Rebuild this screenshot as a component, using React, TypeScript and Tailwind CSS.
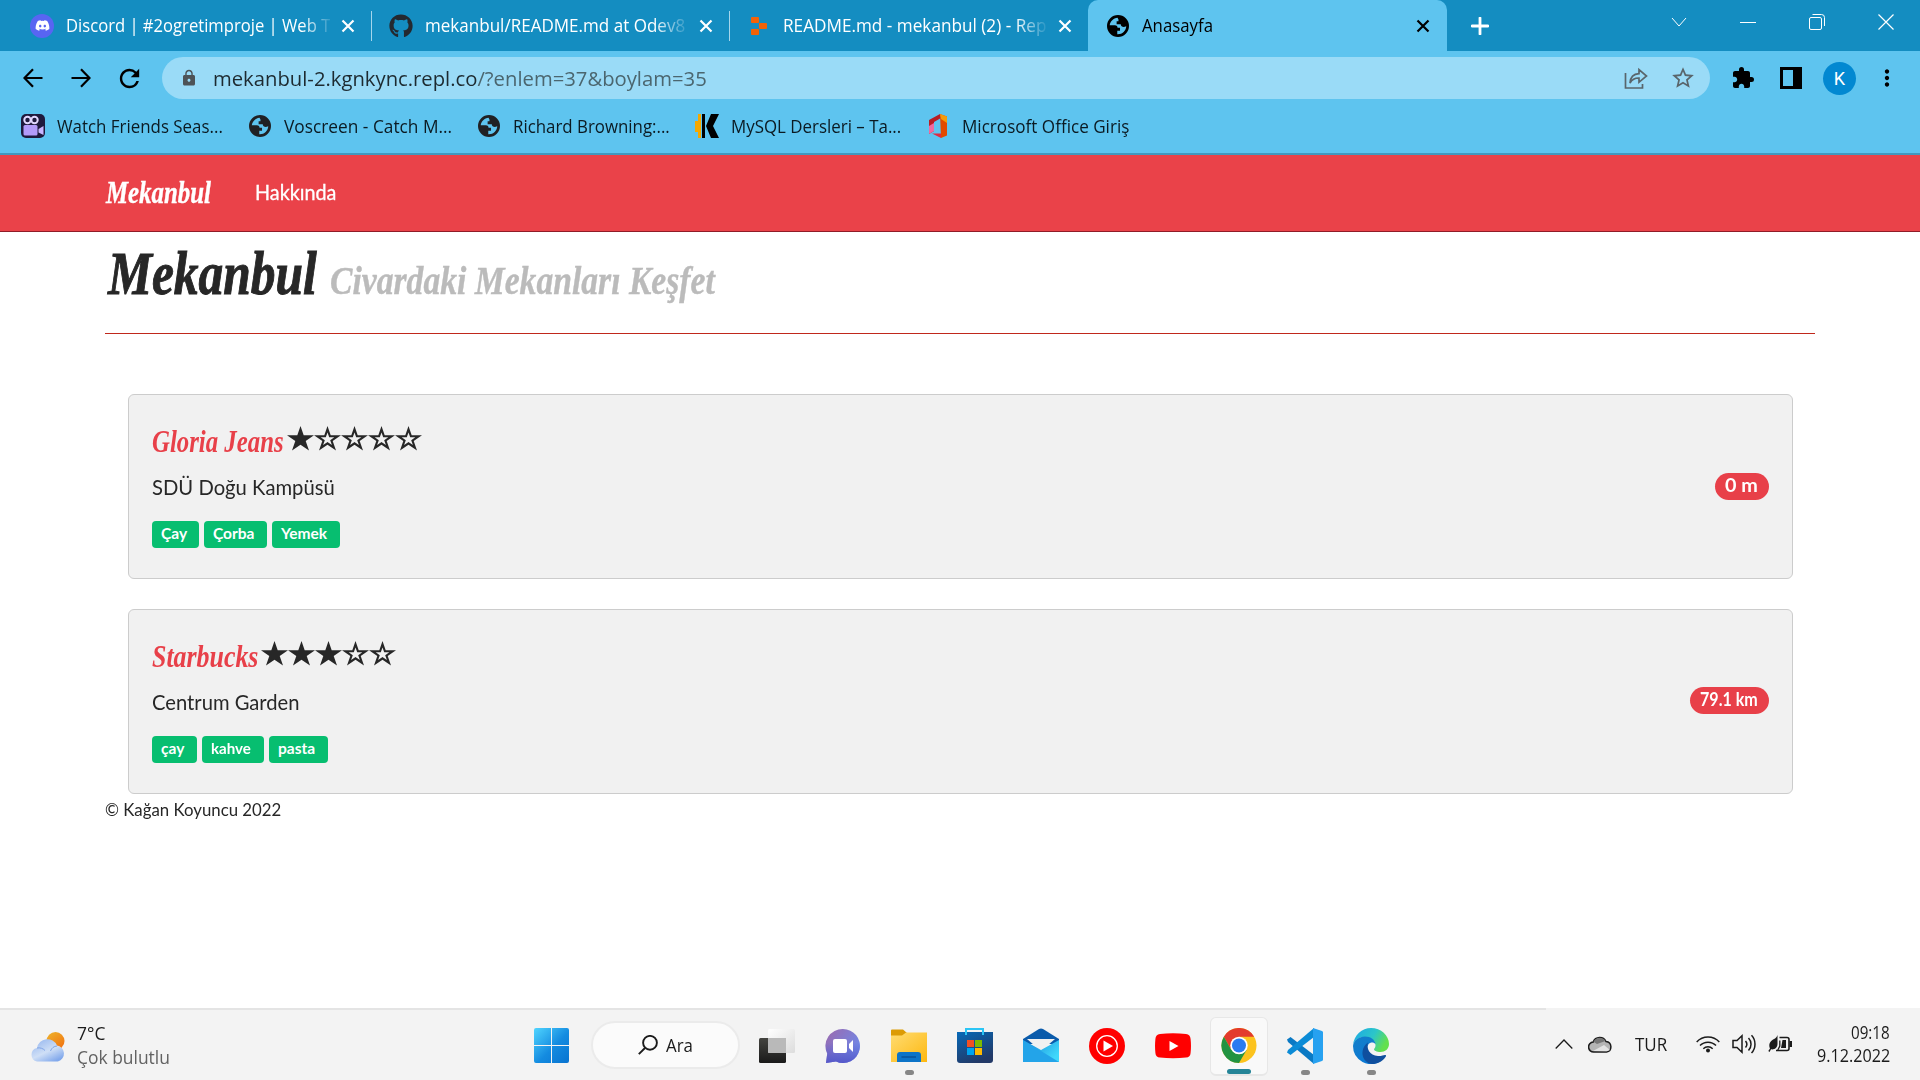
import React, { useLayoutEffect, useRef, useState } from "react";
import { FaDiscord, FaGithub } from "react-icons/fa";
import { MdExtension, MdLock, MdRefresh, MdStarBorder, MdMoreVert } from "react-icons/md";

/* Text stretched horizontally so that it fills the width of its box. */
function Fit({ className = "", children }: { className?: string; children: React.ReactNode }) {
  const box = useRef<HTMLSpanElement>(null);
  const inner = useRef<HTMLSpanElement>(null);
  const [scale, setScale] = useState(1);
  useLayoutEffect(() => {
    if (box.current && inner.current) setScale(box.current.clientWidth / inner.current.offsetWidth);
  }, []);
  return (
    <span ref={box} className={"block shrink-0 whitespace-nowrap " + className}>
      <span ref={inner} className="inline-block origin-left" style={{ transform: `scaleX(${scale})` }}>
        {children}
      </span>
    </span>
  );
}

const SEGOE = "font-['Open_Sans','Noto_Sans',sans-serif]";
const CABIN = "font-['Lato',sans-serif]";
const SCRIPT = "font-['Liberation_Serif',serif] italic font-bold";

function Globe({ className = "" }: { className?: string }) {
  return (
    <svg viewBox="0 0 24 24" className={"shrink-0 " + className}>
      <path
        fill="currentColor"
        fillRule="evenodd"
        d="M12 0a12 12 0 1 0 0 24 12 12 0 0 0 0-24ZM11.500 3C7 3.500 3.500 6.800 3 11.300h5.500c2.200 0 3 1 3 2.700h2.700v3.200h-3V21c5.200.4 9.500-3.500 9.800-8.700l-2.500.7c-2.300 0-3.300-1-3.500-3h-4.500V6.700h2V5Z"
      />
    </svg>
  );
}

function Close({ className = "" }: { className?: string }) {
  return (
    <svg viewBox="0 0 14 14" className={"h-[14px] w-[14px] shrink-0 " + className}>
      <path d="M1.500 1.500l11 11M12.500 1.500l-11 11" stroke="currentColor" strokeWidth="2.2" />
    </svg>
  );
}

function TabStrip() {
  return (
    <div className={"flex h-[51px] items-center bg-[#148dc1] text-[17.5px] text-white " + SEGOE}>
      <span className="ml-[30px] flex h-6 w-6 shrink-0 items-center justify-center rounded-full bg-[#5865f2]">
        <FaDiscord className="h-[15px] w-[15px]" />
      </span>
      <Fit className="ml-3 w-[264px] [mask-image:linear-gradient(to_right,black_236px,transparent_268px)]">Discord | #2ogretimproje | Web T</Fit>
      <Close className="ml-[11px]" />
      <span className="ml-[16px] h-[30px] w-px bg-[#a5d6ec]" />
      <FaGithub className="ml-[17px] h-6 w-6 shrink-0 text-[#24292f]" />
      <Fit className="ml-3 w-[260px] [mask-image:linear-gradient(to_right,black_228px,transparent_266px)]">mekanbul/README.md at Odev8</Fit>
      <Close className="ml-[14px]" />
      <span className="ml-[16px] h-[30px] w-px bg-[#a5d6ec]" />
      <svg viewBox="0 0 16 18" className="ml-[21px] h-[18px] w-4 shrink-0 fill-[#f26207]">
        <rect width="8" height="6" rx="1" />
        <rect x="8" y="6" width="8" height="6" rx="1" />
        <rect y="12" width="8" height="6" rx="1" />
      </svg>
      <Fit className="ml-[16px] w-[263px] [mask-image:linear-gradient(to_right,black_232px,transparent_266px)]">README.md - mekanbul (2) - Rep</Fit>
      <Close className="ml-[12px]" />
      <div className="ml-4 flex h-full w-[359px] shrink-0 items-center rounded-t-[10px] bg-[#5ec4ef] text-black">
        <Globe className="ml-[19px] h-[22px] w-[22px]" />
        <Fit className="ml-[13px] w-[71px]">Anasayfa</Fit>
        <Close className="ml-[203px]" />
      </div>
      <svg viewBox="0 0 18 18" className="ml-[24px] h-[18px] w-[18px] shrink-0">
        <path d="M9 1v16M1 9h16" stroke="white" strokeWidth="2.800" strokeLinecap="round" />
      </svg>
      <div className="mb-[8px] ml-auto mr-[26px] flex items-center gap-[53px]">
        <svg viewBox="0 0 16 16" className="h-4 w-4"><path d="M1 4l7 8 7-8" fill="none" stroke="white" /></svg>
        <svg viewBox="0 0 16 16" className="h-4 w-4"><path d="M0 8.500h16" stroke="white" /></svg>
        <svg viewBox="0 0 16 16" className="h-4 w-4"><g fill="none" stroke="white"><rect x=".5" y="3.500" width="12" height="12" rx="1.500" /><path d="M3.500.5h9a3 3 0 0 1 3 3v8.500" /></g></svg>
        <svg viewBox="0 0 16 16" className="h-4 w-4"><path d="M.5.5l15 15M15.500.5l-15 15" stroke="white" strokeWidth="1.200" /></svg>
      </div>
    </div>
  );
}

function Toolbar() {
  return (
    <div className={"flex h-[54px] items-center text-black " + SEGOE}>
      <svg viewBox="0 0 20 20" className="ml-[23px] h-5 w-5"><path d="M19.500 10H1.800M10 1.200L1.500 10l8.500 8.800" fill="none" stroke="black" strokeWidth="2.200" /></svg>
      <svg viewBox="0 0 20 20" className="ml-[28px] h-5 w-5"><path d="M.5 10h17.700M10 1.200L18.500 10 10 18.800" fill="none" stroke="black" strokeWidth="2.200" /></svg>
      <MdRefresh className="ml-[24px] h-[29px] w-[29px]" />
      <div className="ml-[18px] flex h-[42px] w-[1548px] items-center rounded-full bg-[#9adbf7]">
        <MdLock className="ml-[18px] h-[18px] w-[18px] text-[#4d5357]" />
        <Fit className="ml-[15px] w-[494px] text-[20.500px] text-[#4b666f]">
          <span className="text-[#1d2a30]">mekanbul-2.kgnkync.repl.co</span>/?enlem=37&amp;boylam=35
        </Fit>
        <svg viewBox="0 0 24 22" className="ml-auto h-[22px] w-6">
          <path d="M1.500 6v15h17v-4M6 16c.4-5.500 3-9 9-9.300V2.500L22.500 9 15 15.300V11c-4-.1-7 1.500-9 5Z" fill="none" stroke="#59656b" strokeWidth="1.700" />
        </svg>
        <MdStarBorder className="ml-[22px] mr-[14px] h-[26px] w-[26px] text-[#59656b]" />
      </div>
      <MdExtension className="ml-[21px] h-6 w-6" />
      <svg viewBox="0 0 22 22" className="ml-[25px] h-[22px] w-[22px]"><path fillRule="evenodd" d="M0 0h22v22H0ZM3 3v16h10V3Z" /></svg>
      <span className="ml-[21px] flex h-[33px] w-[33px] items-center justify-center rounded-full bg-[#0288d1] font-['Roboto',sans-serif] text-[18px] text-white">K</span>
      <MdMoreVert className="ml-[18px] h-[26px] w-[26px]" />
    </div>
  );
}

function Bookmarks() {
  return (
    <div className={"flex h-[48px] items-center pb-[6px] text-[17.500px] text-[#0b1a22] " + SEGOE}>
      <svg viewBox="0 0 24 24" className="ml-[21px] h-6 w-6">
        <rect width="24" height="24" rx="5" fill="#1f1a3d" />
        <circle cx="6.500" cy="6" r="3.200" fill="none" stroke="#e1d8ff" strokeWidth="2" />
        <circle cx="13.500" cy="6" r="3.200" fill="none" stroke="#e1d8ff" strokeWidth="2" />
        <rect x="2.500" y="11" width="14" height="10.500" rx="1.500" fill="#b29bfa" />
        <path d="M17.500 15l5-3v9l-5-2.500Z" fill="#c8b6ff" />
      </svg>
      <Fit className="ml-3 w-[166px]">Watch Friends Seas...</Fit>
      <Globe className="ml-[26px] h-[22px] w-[22px] text-[#202124]" />
      <Fit className="ml-[13px] w-[168px]">Voscreen - Catch M...</Fit>
      <Globe className="ml-[26px] h-[22px] w-[22px] text-[#202124]" />
      <Fit className="ml-[13px] w-[157px]">Richard Browning:...</Fit>
      <svg viewBox="0 0 24 24" className="ml-[25px] h-6 w-6">
        <path d="M3 0h3v24H3v-6H0V7h3Z" fill="#f5a800" />
        <path d="M7 0h3v24H7ZM16 0h8l-6 12 6 12h-8l-5-12Z" />
      </svg>
      <Fit className="ml-3 w-[170px]">MySQL Dersleri – Ta...</Fit>
      <svg viewBox="0 0 18 24" className="ml-[28px] h-6 w-[18px]">
        <path d="M0 6L11 0l1 4-7 4v9l-5 3Z" fill="#b81e24" />
        <path d="M0 12l5-3v8l-5 3Z" fill="#ef6aa0" />
        <path d="M11 0l7 2.500v19L12 24Z" fill="#e24a00" />
        <path d="M11 0l7 2.500V9l-6-4Z" fill="#f49b0b" />
        <path d="M3 19.500h9V24Z" fill="#e02b43" />
      </svg>
      <Fit className="ml-[15px] w-[167px]">Microsoft Office Giriş</Fit>
    </div>
  );
}

function Star({ filled }: { filled: boolean }) {
  return (
    <svg viewBox="0 0 27 25" className="h-[25px] w-[27px] shrink-0">
      {filled ? (
        <path d="M13.500 0l3.200 9.200H27l-8.300 5.800 3.300 9.500-8.500-5.700L5 24.500 8.300 15 0 9.200h10.300Z" fill="#272727" />
      ) : (
        <path fillRule="evenodd" d="M13.500 0l3.200 9.200H27l-8.300 5.800 3.300 9.500-8.500-5.700L5 24.500 8.300 15 0 9.200h10.300ZM13.500 6.400l-1.700 4.900H6.700l4.100 3-1.700 4.800 4.400-3 4.400 3-1.700-4.800 4.100-3h-5.100Z" fill="#272727" />
      )}
    </svg>
  );
}

type Tag = { label: string; box: string; text: string };
type Venue = { name: string; nameW: string; gap: string; rating: number; address: string; addressW: string; tags: Tag[]; distance: string; distBox: string; distText: string };

const venues: Venue[] = [
  {
    name: "Gloria Jeans", nameW: "w-[132px]", gap: "ml-[3px]", rating: 1, address: "SDÜ Doğu Kampüsü", addressW: "w-[183px]",
    tags: [
      { label: "Çay", box: "w-[47px]", text: "w-[26px]" },
      { label: "Çorba", box: "w-[63px]", text: "w-[41px]" },
      { label: "Yemek", box: "w-[68px]", text: "w-[46px]" },
    ],
    distance: "0 m", distBox: "mb-0 w-[54px]", distText: "w-[33px]",
  },
  {
    name: "Starbucks", nameW: "w-[106px]", gap: "ml-[3px]", rating: 3, address: "Centrum Garden", addressW: "w-[148px]",
    tags: [
      { label: "çay", box: "w-[45px]", text: "w-[23px]" },
      { label: "kahve", box: "w-[62px]", text: "w-[40px]" },
      { label: "pasta", box: "w-[59px]", text: "w-[37px]" },
    ],
    distance: "79.1 km", distBox: "mb-[2px] w-[79px]", distText: "w-[58px]",
  },
];

function VenueCard({ v }: { v: Venue }) {
  return (
    <article className="flex h-[185px] items-center justify-between rounded-md border border-[#ccc] bg-[#f1f1f1] px-[23px]">
      <div className="h-full pt-[27px]">
        <div className="flex h-[40px] items-center">
          <Fit className={"text-[31px] leading-[40px] text-[#e84049] " + SCRIPT + " " + v.nameW}>{v.name}</Fit>
          <div className={"mb-[7px] flex " + v.gap}>
            {[1, 2, 3, 4, 5].map((n) => <Star key={n} filled={n <= v.rating} />)}
          </div>
        </div>
        <Fit className={"mt-[10px] text-[21px] leading-[30px] text-[#272727] " + CABIN + " " + v.addressW}>{v.address}</Fit>
        <div className="mt-[19px] flex gap-[5px]">
          {v.tags.map((t) => (
            <span key={t.label} className={"flex h-[27px] rounded bg-[#07be70] pl-[9px] text-[15.500px] font-bold leading-[25px] text-white " + CABIN + " " + t.box}>
              <Fit className={t.text}>{t.label}</Fit>
            </span>
          ))}
        </div>
      </div>
      <span className={"flex h-[27px] rounded-full bg-[#e84049] pl-[10px] text-[18px] font-bold leading-[25px] text-white " + CABIN + " " + v.distBox}>
        <Fit className={v.distText}>{v.distance}</Fit>
      </span>
    </article>
  );
}

function Page() {
  return (
    <main className="h-[853px] bg-white">
      <nav className="flex h-[77px] items-center border-b border-[#901c28] bg-[#ea4249] text-white">
        <Fit className={"ml-[106px] w-[105px] text-[31px] [-webkit-text-stroke:0.4px_white] " + SCRIPT}>Mekanbul</Fit>
        <Fit className={"mb-[2px] ml-[44px] w-[81px] text-[21px] [-webkit-text-stroke:0.3px_white] " + CABIN}>Hakkında</Fit>
      </nav>
      <div className="mx-[105px]">
        <header className="flex h-[102px] items-baseline border-b border-[#c0281b] pt-[7px]">
          <Fit className={"ml-[3px] w-[209px] text-[61px] leading-[70px] text-[#272727] [-webkit-text-stroke:1px_#272727] " + SCRIPT}>Mekanbul</Fit>
          <Fit className={"ml-[13px] w-[385px] text-[40px] leading-[50px] text-[#bbb] [-webkit-text-stroke:0.4px_#bbb] " + SCRIPT}>Civardaki Mekanları Keşfet</Fit>
        </header>
        <section className="mx-[23px] mr-[22px] flex flex-col gap-[30px] pt-[60px]">
          {venues.map((v) => <VenueCard key={v.name} v={v} />)}
        </section>
        <Fit className={"mt-[2px] w-[176px] text-[17px] leading-[28px] text-[#272727] " + CABIN}>© Kağan Koyuncu 2022</Fit>
      </div>
    </main>
  );
}

function StartIcon() {
  return (
    <svg viewBox="0 0 36 36" className="h-9 w-9">
      <defs><linearGradient id="win" x2="1" y2="1"><stop stopColor="#50d5ff" /><stop offset=".55" stopColor="#148be0" /><stop offset="1" stopColor="#0873d0" /></linearGradient></defs>
      <path fill="url(#win)" d="M2 0h15v17H0V2a2 2 0 0 1 2-2ZM18 0h15a2 2 0 0 1 2 2v15H18ZM0 18h17v17H2a2 2 0 0 1-2-2ZM18 18h17v15a2 2 0 0 1-2 2H18Z" />
    </svg>
  );
}

function TaskViewIcon() {
  return (
    <svg viewBox="0 0 36 36" className="h-9 w-9">
      <defs>
        <linearGradient id="tv1" x2="0" y2="1"><stop stopColor="#444440" /><stop offset="1" stopColor="#1a1a1a" /></linearGradient>
        <linearGradient id="tv2" x2="1" y2="1"><stop stopColor="#fff" /><stop offset="1" stopColor="#dcdcdc" /></linearGradient>
      </defs>
      <rect y="10" width="27" height="25" rx="1.500" fill="url(#tv1)" />
      <rect x="9" y="1" width="27" height="24" rx="1.500" fill="url(#tv2)" />
      <path d="M9 10h18v15H10.500A1.500 1.500 0 0 1 9 23.500Z" fill="#b9b9b9" />
    </svg>
  );
}

function ChatIcon() {
  return (
    <svg viewBox="0 0 36 36" className="h-9 w-9">
      <defs>
        <linearGradient id="chat" x1=".1" x2=".9" y1="0" y2=".6"><stop stopColor="#9a6bb0" /><stop offset="1" stopColor="#7187e6" /></linearGradient>
        <linearGradient id="chat2" x2="0" y2="1"><stop offset=".4" stopColor="#5558c9" stopOpacity="0" /><stop offset="1" stopColor="#5558c9" /></linearGradient>
      </defs>
      <path d="M18 1a17 17 0 1 1-7 32.500L1 35l1.200-9.500A17 17 0 0 1 18 1Z" fill="url(#chat)" />
      <path d="M18 1a17 17 0 1 1-7 32.500L1 35l1.200-9.500A17 17 0 0 1 18 1Z" fill="url(#chat2)" />
      <rect x="8" y="11" width="14" height="14" rx="2" fill="#fff" />
      <path d="M24 16l4-4v12l-4-4Z" fill="#fff" />
    </svg>
  );
}

function ExplorerIcon() {
  return (
    <svg viewBox="0 0 36 36" className="h-9 w-9">
      <defs><linearGradient id="fold" x2="1" y2="1"><stop stopColor="#ffdc73" /><stop offset="1" stopColor="#fdb810" /></linearGradient></defs>
      <path d="M1 1.500h11l4 3.500h19v5H0v-7.500a1 1 0 0 1 1-1Z" fill="#dc9b05" />
      <path d="M0 7.500h11l4-3h21v29.500H0Z" fill="url(#fold)" />
      <path d="M6 34V27a3 3 0 0 1 3-3h18a3 3 0 0 1 3 3v7Z" fill="#0d74c8" />
      <path d="M10.500 29h14.500" stroke="#09529a" strokeWidth="1.500" />
    </svg>
  );
}

function StoreIcon() {
  return (
    <svg viewBox="0 0 36 36" className="h-9 w-9">
      <defs><linearGradient id="store" x2=".5" y2="1"><stop stopColor="#0669b8" /><stop offset="1" stopColor="#223967" /></linearGradient></defs>
      <path d="M0 4h36v28a3 3 0 0 1-3 3H3a3 3 0 0 1-3-3Z" fill="url(#store)" />
      <path d="M9 7V1h17v6" fill="none" stroke="#2bc5f5" strokeWidth="2" />
      <path d="M10 12h7v7h-7Z" fill="#f25022" /><path d="M18 12h7v7h-7Z" fill="#7fba00" />
      <path d="M10 20h7v7h-7Z" fill="#00a4ef" /><path d="M18 20h7v7h-7Z" fill="#ffb900" />
    </svg>
  );
}

function MailIcon() {
  return (
    <svg viewBox="0 0 36 36" className="h-9 w-9">
      <defs><linearGradient id="mail" x2="1" y2=".6"><stop stopColor="#1684d5" /><stop offset="1" stopColor="#40d8fb" /></linearGradient></defs>
      <path d="M0 11L16 1a4 4 0 0 1 4 0l16 10v5H0Z" fill="#0a5bab" />
      <path d="M4 11h28L18 23Z" fill="#f1f1f1" />
      <path d="M0 12l18 10 18-10v22H0Z" fill="url(#mail)" />
      <path d="M0 12l36 22H0Z" fill="#23a4e9" />
    </svg>
  );
}

function YtMusicIcon() {
  return (
    <svg viewBox="0 0 36 36" className="h-9 w-9">
      <circle cx="18" cy="18" r="18" fill="#f00" />
      <circle cx="18" cy="18" r="10.300" fill="none" stroke="#fff" strokeWidth="1.300" />
      <path d="M14.500 12.500L24 18l-9.500 5.500Z" fill="#fff" />
    </svg>
  );
}

function YoutubeIcon() {
  return (
    <svg viewBox="0 0 36 36" className="h-9 w-9">
      <path d="M5 6c8-.9 18-.9 26 0 3 .3 4.300 2 4.600 5 .5 5 .5 9 0 14-.3 3-1.600 4.300-4.600 4.600-8 .7-18 .7-26 0-3-.3-4.300-1.600-4.600-4.600-.5-5-.5-9 0-14C.700 8 2 6.300 5 6Z" fill="#f00" />
      <path d="M14.500 13L23.500 18l-9 5Z" fill="#fff" />
    </svg>
  );
}

function ChromeIcon() {
  return (
    <svg viewBox="0 0 36 36" className="h-9 w-9">
      <circle cx="18" cy="18" r="18" fill="#fcc31e" />
      <path d="M18 9h15.600A18 18 0 0 0 2.400 9l7.800 13.500Z" fill="#e33b2e" />
      <path d="M2.400 9a18 18 0 0 0 15.600 27l7.800-13.500H10.200Z" fill="#229342" />
      <circle cx="18" cy="18" r="9" fill="#fff" />
      <circle cx="18" cy="18" r="7.200" fill="#2b7bf0" />
    </svg>
  );
}

function CodeIcon() {
  return (
    <svg viewBox="0 0 36 36" className="h-9 w-9">
      <path d="M0 11.500L3.500 9 27 27v9L1 14Z" fill="#0a79c4" />
      <path d="M0 24.500L3.500 27 27 9V0L1 22Z" fill="#0b8bd6" />
      <path d="M26 0l9 3a2 2 0 0 1 1 2v26a2 2 0 0 1-1 2l-9 3Z" fill="#27a1f0" />
    </svg>
  );
}

function EdgeIcon() {
  return (
    <svg viewBox="0 0 36 36" className="h-9 w-9">
      <defs>
        <linearGradient id="edge1" x2="1" y2=".4"><stop stopColor="#1ba7e8" /><stop offset=".6" stopColor="#2cc6c8" /><stop offset="1" stopColor="#63e04e" /></linearGradient>
        <linearGradient id="edge2" x2=".6" y2="1"><stop stopColor="#147fc9" /><stop offset="1" stopColor="#0a78d4" /></linearGradient>
      </defs>
      <path d="M0 17C1 7 9 0 18 0c10 0 18 7.500 18 16 0 5-4 8-8.500 8-4 0-6.500-1.500-6.500-2.700 0-.8 1.500-1.300 1.500-3.800 0-4-4-8.500-11-8.500C6 9 1.500 12.500 0 17Z" fill="url(#edge1)" />
      <path d="M0 18C.5 12.500 6 8.500 12 8.500c6 0 10 3.500 10.500 7.500-1.500-1.800-5-2.500-7.200.5C12 21.500 16 29 24 30l4 3A18 18 0 0 1 0 18Z" fill="url(#edge2)" />
      <path d="M15 14.500c-2 5.500 1.500 13 10 13.500 4 .2 6-1.500 7.500-1 .8.300.6 1 .2 1.700C29.500 33.500 24 36 19 36c-7-1-10-7-9.500-12 .3-4 2.500-7.500 5.500-9.500Z" fill="#0f4f9e" />
    </svg>
  );
}

function Slot({ children, mark = "none" }: { children: React.ReactNode; mark?: "none" | "dot" | "bar" }) {
  return (
    <div className="flex w-[66px] shrink-0 flex-col items-center">
      <div className={mark === "bar"
        ? "flex h-[59px] w-[58px] flex-col items-center rounded-md border border-b-2 border-[#e7e7e7] bg-[#f9f9f9] pt-[10px]"
        : "flex h-[59px] w-[58px] flex-col items-center pt-[11px]"}>
        {children}
        {mark === "dot" && <span className="mt-[6px] h-[5px] w-[9px] rounded-full bg-[#868686]" />}
        {mark === "bar" && <span className="mt-[6px] h-[5px] w-6 shrink-0 rounded-full bg-[#258497]" />}
      </div>
    </div>
  );
}

function Taskbar() {
  return (
    <footer className={"h-[72px] bg-[#f3f3f3] text-[#1b1b1b] " + SEGOE}>
      <div className="h-[2px] w-[1546px] bg-[#e4e4e4]" />
      <div className="flex h-[70px]">
        <svg viewBox="0 0 36 30" className="ml-[30px] mt-[22px] h-[30px] w-9 shrink-0">
          <defs>
            <linearGradient id="sun" x2=".7" y2="1"><stop stopColor="#eeb52b" /><stop offset="1" stopColor="#f17412" /></linearGradient>
            <linearGradient id="cl" x2=".7" y2="1"><stop stopColor="#8fb2ee" /><stop offset=".6" stopColor="#cfdff6" /><stop offset="1" stopColor="#82a9ec" /></linearGradient>
          </defs>
          <circle cx="25.500" cy="9" r="9" fill="url(#sun)" />
          <path d="M7 29.500a6.900 6.900 0 0 1 0-13.500A10.500 10.500 0 0 1 27 13.500a8.200 8.200 0 0 1 1 16Z" fill="url(#cl)" />
          <path d="M7 16c3-.6 6 .4 8 2.500M20.500 19c1-3 3.500-4.800 6.500-5" fill="none" stroke="#7fa4e6" />
        </svg>
        <div className="ml-[11px] w-[380px] pt-[11px] text-[18px] leading-[24px]">
          <Fit className="w-[28px]">7°C</Fit>
          <Fit className="w-[93px] text-[#626262]">Çok bulutlu</Fit>
        </div>
        <div className="ml-[77px] mt-[18px] w-9 shrink-0"><StartIcon /></div>
        <div className="ml-[21px] mr-[-1px] mt-[11px] flex h-[48px] w-[149px] shrink-0 items-center rounded-full border-2 border-[#ebebeb] bg-[#fbfbfb]">
          <svg viewBox="0 0 20 20" className="ml-[45px] h-5 w-5"><g fill="none" stroke="#1b1b1b" strokeWidth="1.900"><circle cx="12" cy="7.800" r="6.900" /><path d="M7 13L.8 19.200" /></g></svg>
          <Fit className="ml-[8px] mt-px w-[27px] text-[17.500px]">Ara</Fit>
        </div>
        <div className="ml-[5px] flex pt-[7px]">
          <Slot><TaskViewIcon /></Slot>
          <Slot><ChatIcon /></Slot>
          <Slot mark="dot"><ExplorerIcon /></Slot>
          <Slot><StoreIcon /></Slot>
          <Slot><MailIcon /></Slot>
          <Slot><YtMusicIcon /></Slot>
          <Slot><YoutubeIcon /></Slot>
          <Slot mark="bar"><ChromeIcon /></Slot>
          <Slot mark="dot"><CodeIcon /></Slot>
          <Slot mark="dot"><EdgeIcon /></Slot>
        </div>
        <div className="ml-auto mr-[30px] flex h-[68px] items-center">
          <svg viewBox="0 0 18 10" className="h-[10px] w-[18px]"><path d="M.7 9.500L9 1l8.300 8.500" fill="none" stroke="#1b1b1b" strokeWidth="1.300" /></svg>
          <svg viewBox="0 0 24 17" className="ml-[15px] h-[17px] w-6">
            <path d="M6 16a5 5 0 0 1-.8-10A7 7 0 0 1 18 5.500a5.300 5.300 0 0 1 .5 10.500Z" fill="#b5b5b5" stroke="#1b1b1b" strokeWidth="1.500" />
            <path d="M5.500 5.700C8 1 14 0 17.500 5L9 8Z" fill="#777" /><path d="M5 15l11-6 6 5-3 1.200Z" fill="#e3e3e3" />
          </svg>
          <Fit className="ml-[23px] w-[32px] text-[17.500px]">TUR</Fit>
          <svg viewBox="0 0 24 18" className="ml-[29px] h-[18px] w-6"><g fill="none" stroke="#1b1b1b" strokeWidth="1.500"><path d="M.7 7a15.500 15.500 0 0 1 22.600 0M4 10.500a11.300 11.300 0 0 1 16 0M7.300 13.700a6.800 6.800 0 0 1 9.400 0" /></g><circle cx="12" cy="15.500" r="2" fill="#1b1b1b" /></svg>
          <svg viewBox="0 0 25 20" className="ml-[12px] h-5 w-[25px]"><g fill="none" stroke="#1b1b1b" strokeWidth="1.500"><path d="M1 6.500h4L10 1.800v16.400L5 13.500H1ZM13.500 7a5 5 0 0 1 0 6.500M16.500 4a9 9 0 0 1 0 12.500M19.500 1.300a13 13 0 0 1 0 17.700" /></g></svg>
          <svg viewBox="0 0 25 18" className="ml-[11px] h-[18px] w-[25px]">
            <path d="M11.500 2.500H19a2 2 0 0 1 2 2v9a2 2 0 0 1-2 2H8" fill="none" stroke="#1b1b1b" strokeWidth="1.600" />
            <path d="M14.500 5H18v8h-5ZM21.500 6H24v6h-2.500ZM9.500 0v9c0 4-3.500 6-6.500 5.300L1.500 17 .300 16 2 13.500C-.5 8 4 5 7 3.500 8.300 2.500 9 1.500 9.500 0Z" fill="#1b1b1b" />
            <path d="M11.800 5.500V11l-2 4" fill="none" stroke="#1b1b1b" strokeWidth="1.300" />
          </svg>
          <div className="ml-[24px] flex flex-col items-end pb-[1px] text-[17.500px] leading-[23px]">
            <Fit className="w-[39px]">09:18</Fit>
            <Fit className="w-[73px]">9.12.2022</Fit>
          </div>
        </div>
      </div>
    </footer>
  );
}

export default function App() {
  return (
    <div className="flex h-[1080px] w-[1920px] flex-col overflow-hidden">
      <div className="h-[155px] border-b-2 border-[#4298be] bg-[#5ec4ef]">
        <TabStrip />
        <Toolbar />
        <Bookmarks />
      </div>
      <Page />
      <Taskbar />
    </div>
  );
}
